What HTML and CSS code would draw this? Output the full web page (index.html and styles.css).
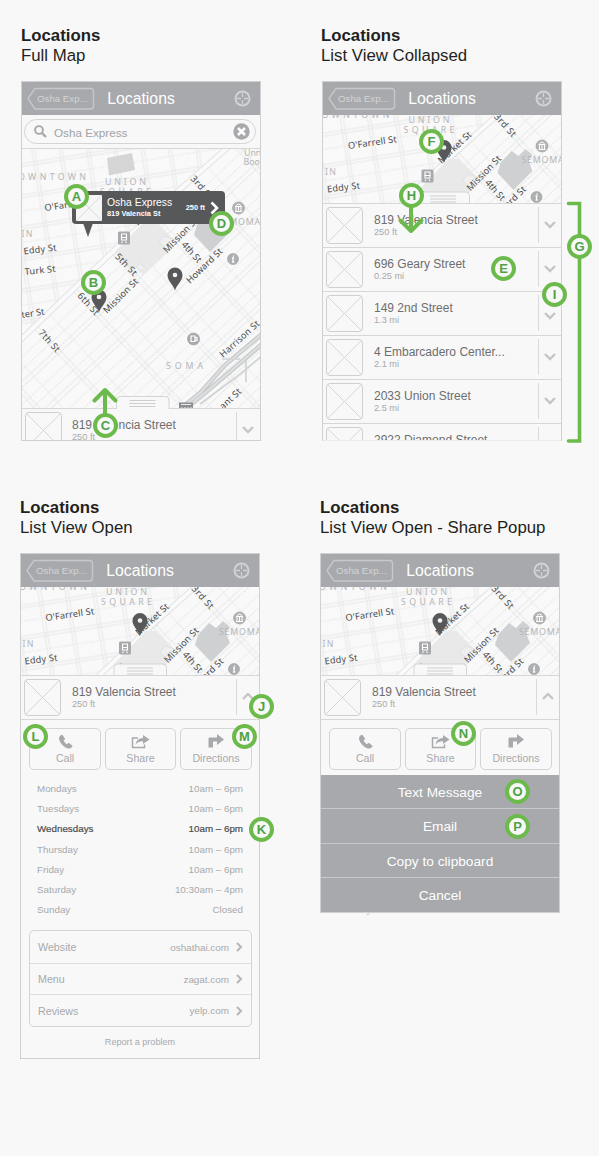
FILE: index.html
```html
<!DOCTYPE html>
<html lang="en">
<head>
<meta charset="utf-8">
<title>Locations</title>
<link rel="stylesheet" href="styles.css">
</head>
<body>
<svg class="defs" width="0" height="0" aria-hidden="true">
  <defs>
    <pattern id="nw" width="27" height="31" patternUnits="userSpaceOnUse" patternTransform="rotate(-9)">
      <path d="M0 10H27M0 13H27M8 0V31M11 0V31" stroke="#e3e3e4" stroke-width=".8" fill="none"/>
      <path d="M0 26H27" stroke="#eaeaea" stroke-width="1" stroke-dasharray="3 1" fill="none"/>
    </pattern>
    <pattern id="se" width="54" height="35" patternUnits="userSpaceOnUse" patternTransform="rotate(-43)">
      <path d="M0 14H54M0 18.500H54M17 0V35M21 0V35" stroke="#dedfe0" stroke-width=".8" stroke-dasharray="3 .8" fill="none"/>
      <path d="M0 31H54M0 5.500H54M38 0V35" stroke="#e5e5e6" stroke-width=".9" stroke-dasharray="2 1" fill="none"/>
    </pattern>
    <g id="pin"><path d="M0 11.500C-1.500 6-7.500 2-7.500-4A7.500 7.500 0 0 1 7.500-4C7.500 2 1.500 6 0 11.500Z" fill="#57585a"/><circle cy="-4" r="2.300" fill="#f4f4f4"/></g>
    <g id="map">
      <rect x="10" y="140" width="260" height="280" fill="#f9f9f9"/>
      <path d="M10 140H235L150 215L10 347Z" fill="url(#nw)"/>
      <path d="M235 140H270V420H10V350L150 218Z" fill="url(#se)"/>
      <path d="M10 350L150 216L236 140" stroke="#e3e4e5" stroke-width="6" fill="none"/>
      <path d="M10 350L150 216L236 140" stroke="#fafafa" stroke-width="4" fill="none"/>
      <path d="M107 158L132 153L135 170L109 175.500Z" fill="#d5d5d6"/>
      <path d="M115 252L145 221L155 221L173 239L164 247L168 251L143 275L136 268L131 272Z" fill="#e9e9e9"/>
      <path d="M159 242L164 236L173 239L164 247ZM136 268L140 263L147 270" fill="#efefef" stroke="#dcdddd" stroke-width=".8"/>
      <path d="M208 213L215 218L222 211L229 217L225 223L229 233L210 252L194 235L197 225Z" fill="#cfd0d1"/>
      <path d="M262 334L225 365L200 393L184 406M262 344L232 370L205 393L184 410" stroke="#c3c5c7" stroke-width="4.500" fill="none"/>
      <path d="M262 334L225 365L200 393L184 406M262 344L232 370L205 393L184 410" stroke="#dcddde" stroke-width="2.500" fill="none"/>
      <path d="M262 356L235 378L200 404M222 359H240M246 360V382" stroke="#d0d2d3" stroke-width="1.600" fill="none"/>
      <g class="district">
        <text x="18" y="180" textLength="68">OWNTOWN</text>
        <text x="105" y="184.500" textLength="41">UNION</text>
        <text x="100" y="194.500" textLength="51">SQUARE</text>
        <text x="21.500" y="237" textLength="11">IN</text>
        <text x="218" y="225" textLength="42">SEMOMA</text>
        <text x="166" y="368.500" textLength="37">SOMA</text>
        <text x="244" y="155.500">Unn</text>
        <text x="243.500" y="165">Boo</text>
      </g>
      <g class="street">
        <text transform="translate(45 211) rotate(-8)" textLength="49">O'Farrell St</text>
        <text transform="translate(24 254.500) rotate(-7)" textLength="33">Eddy St</text>
        <text transform="translate(25 275) rotate(-6)" textLength="31">Turk St</text>
        <text transform="translate(22 318) rotate(-9)" textLength="23">ter St</text>
        <text transform="translate(38 333) rotate(48)" textLength="27">7th St</text>
        <text transform="translate(77 296) rotate(48)" textLength="27">6th St</text>
        <text transform="translate(114.500 257) rotate(46)" textLength="27">5th St</text>
        <text transform="translate(181 245) rotate(48)" textLength="25">4th St</text>
        <text transform="translate(190 179) rotate(48)" textLength="28">3rd St</text>
        <text transform="translate(138 226) rotate(-43)" textLength="42">Market St</text>
        <text transform="translate(107 314) rotate(-45)" textLength="45">Mission St</text>
        <text transform="translate(167 253.500) rotate(-46)" textLength="45">Mission St</text>
        <text transform="translate(190 284) rotate(-44)" textLength="46">Howard St</text>
        <text transform="translate(223 358) rotate(-42)" textLength="50">Harrison St</text>
        <text transform="translate(223 410) rotate(-43)" textLength="26">ant St</text>
      </g>
      <rect x="118" y="231.500" width="12" height="13" rx="1.500" fill="#a7a9ac"/>
      <path d="M121.500 234h5v6h-5zM121.500 243l1-1.500M126.500 243l-1-1.500" fill="none" stroke="#fff" stroke-width="1.100"/><path d="M121 237.500h6" stroke="#fff"/>
      <circle cx="238.500" cy="208" r="6" fill="#b1b3b5" stroke="#999b9e" stroke-width=".6"/>
      <path d="M235 206.500h7M235 211.500h7M236 207v4M241 207v4M238.500 207v4M236 205.500l2.500-1.500l2.500 1.500" stroke="#fff" fill="none"/>
      <circle cx="233" cy="259" r="5.500" fill="#adafb1" stroke="#999b9e" stroke-width=".6"/>
      <path d="M233.500 255.500v1.300M232 258h1.300l-.5 4h1.400" stroke="#fff" stroke-width="1.300" fill="none"/>
      <circle cx="193.500" cy="339" r="6" fill="#a7a9ac" stroke="#999b9e" stroke-width=".6"/>
      <path d="M191 336h4v5.500h-4zM195 337.500h2v3h-2" fill="none" stroke="#fff" stroke-width="1.200"/>
      <path d="M179 402.500h14v8h-14z" fill="#8b8d90"/><path d="M181 404.500h10M182 407v4M185 407v4M188 407v4M191 407v4" stroke="#eee"/>
    </g>
    <g id="tab"><path d="M0 12.500H95V4Q95 .500 98.500 .500H144Q147.500 .500 147.500 4V12.500" fill="#f8f8f8" stroke="#d3d4d5"/><path d="M-5 12.500H245" stroke="#d6d7d8"/><path d="M95.500 12.500H147" stroke="#f8f8f8" stroke-width="1.400"/><path d="M108 4.500H134M108 7.500H134M108 10.500H134" stroke="#ccced0" stroke-width="1.200"/></g>
    <g id="back"><path d="M1 11.500L8 1.500H63.500Q66.500 1.500 66.500 4.500V19Q66.500 22 63.500 22H8Z" fill="none" stroke="#c6c8ca" stroke-width="1.400"/></g>
    <g id="locate" fill="none" stroke="#d0d2d4"><circle cx="8.500" cy="8.500" r="7" stroke-width="2"/><path d="M8.500 3V7M8.500 10V14M3 8.500H7M10 8.500H14" stroke-width="1.300"/></g>
    <g id="down"><path d="M1 1L6 6L11 1" fill="none" stroke="#c3c5c7" stroke-width="2.400"/></g>
    <g id="up"><path d="M1 6L6 1L11 6" fill="none" stroke="#c3c5c7" stroke-width="2.400"/></g>
    <g id="right"><path d="M1 1L5 5L1 9" fill="none" stroke="#b4b6b8" stroke-width="2"/></g>
    <g id="thumb"><rect x=".500" y=".500" width="36" height="36" rx="3.500" fill="none" stroke="#cdcfd0"/><path d="M2 2L35 35M35 2L2 35" stroke="#d6d7d8"/></g>
    <g id="phone"><path d="M4.500 1L6.800 4.200Q7.300 5 6.500 5.700L5.500 6.500Q6.600 8.800 9 10.200L10 9.300Q10.800 8.700 11.500 9.300L14.200 11.500Q14.800 12.200 14 13Q12 15.300 9 14.200Q2.500 11.300 1 5Q.600 2.800 2.800 1.200Q3.800 .300 4.500 1Z" fill="#a7a9ac"/></g>
    <g id="share"><path d="M7 4H1.500V13.500H13.500V10.500" fill="none" stroke="#a7a9ac" stroke-width="1.500"/><path d="M12 1L18.500 5.500L12 10V7.200Q7.500 7 4.500 10.500Q5.500 4.300 12 4Z" fill="#a7a9ac"/></g>
    <g id="turn"><path d="M.500 13.500V4.500Q.500 3.500 1.500 3.500H9V0L16 5.500L9 11V7.500H5V13.500Z" fill="#a7a9ac"/></g>
  </defs>
</svg>

<main class="board">
  <section class="cell">
    <h2 class="caption offset"><b>Locations</b><span>Full Map</span></h2>
    <div class="screen full">
      <header class="bar"><span class="back"><svg class="back-shape" width="68" height="24"><use href="#back"/></svg>Osha Exp...</span><h3>Locations</h3><svg class="locate" width="17" height="17"><use href="#locate"/></svg></header>
      <div class="search">
        <div class="field">
          <svg width="13" height="13" viewBox="0 0 13 13"><circle cx="5" cy="5" r="3.900" fill="none" stroke="#a7a9ac" stroke-width="1.900"/><path d="M8 8L12 12" stroke="#a7a9ac" stroke-width="2.400"/></svg>
          <span>Osha Express</span>
          <svg class="clear" width="17" height="17" viewBox="0 0 17 17"><circle cx="8.500" cy="8.500" r="8.200" fill="#a7a9ac"/><path d="M5 5L12 12M12 5L5 12" stroke="#fff" stroke-width="2.600"/></svg>
        </div>
      </div>
      <div class="map-wrap">
        <svg class="map" width="238" height="260" viewBox="22 149 238 260"><use href="#map"/><use href="#pin" x="175" y="279"/><use href="#pin" x="99" y="301"/><use href="#tab" x="21.500" y="396"/></svg>
        <div class="bubble">
          <svg width="26" height="26"><rect width="26" height="26" rx="1" fill="#f6f6f6"/><path d="M1 1L25 25M25 1L1 25" stroke="#d5d6d7" stroke-width=".8"/></svg>
          <div class="bubble-text"><span>Osha Express</span><b>819 Valencia St</b></div>
          <b class="feet">250 ft</b>
          <svg width="9" height="14"><path d="M1.500 1.500L7 7L1.500 12.500" fill="none" stroke="#fff" stroke-width="2.600"/></svg>
        </div>
      </div>
      <div class="row first"><svg class="thumb" width="37" height="37"><use href="#thumb"/></svg><div class="place"><span>819 Valencia Street</span><small>250 ft</small></div><span class="toggle"><svg width="12" height="8"><use href="#down"/></svg></span></div>
    </div>
  </section>

  <section class="cell">
    <h2 class="caption offset"><b>Locations</b><span>List View Collapsed</span></h2>
    <div class="screen list">
      <header class="bar"><span class="back"><svg class="back-shape" width="68" height="24"><use href="#back"/></svg>Osha Exp...</span><h3>Locations</h3><svg class="locate" width="17" height="17"><use href="#locate"/></svg></header>
      <svg class="map" width="238" height="88" viewBox="19.500 177 238 88"><use href="#map"/><use href="#pin" x="140.500" y="213.500"/><use href="#tab" x="18.500" y="253.500"/></svg>
      <div class="row"><svg class="thumb" width="37" height="37"><use href="#thumb"/></svg><div class="place"><span>819 Valencia Street</span><small>250 ft</small></div><span class="toggle"><svg width="12" height="8"><use href="#down"/></svg></span></div>
      <div class="row"><svg class="thumb" width="37" height="37"><use href="#thumb"/></svg><div class="place"><span>696 Geary Street</span><small>0.25 mi</small></div><span class="toggle"><svg width="12" height="8"><use href="#down"/></svg></span></div>
      <div class="row"><svg class="thumb" width="37" height="37"><use href="#thumb"/></svg><div class="place"><span>149 2nd Street</span><small>1.3 mi</small></div><span class="toggle low"><svg width="12" height="8"><use href="#down"/></svg></span></div>
      <div class="row"><svg class="thumb" width="37" height="37"><use href="#thumb"/></svg><div class="place"><span>4 Embarcadero Center...</span><small>2.1 mi</small></div><span class="toggle"><svg width="12" height="8"><use href="#down"/></svg></span></div>
      <div class="row"><svg class="thumb" width="37" height="37"><use href="#thumb"/></svg><div class="place"><span>2033 Union Street</span><small>2.5 mi</small></div><span class="toggle"><svg width="12" height="8"><use href="#down"/></svg></span></div>
      <div class="row"><svg class="thumb" width="37" height="37"><use href="#thumb"/></svg><div class="place"><span>2922 Diamond Street</span></div><span class="toggle"></span></div>
    </div>
  </section>

  <section class="cell">
    <h2 class="caption"><b>Locations</b><span>List View Open</span></h2>
    <div class="screen open">
      <header class="bar"><span class="back"><svg class="back-shape" width="68" height="24"><use href="#back"/></svg>Osha Exp...</span><h3>Locations</h3><svg class="locate" width="17" height="17"><use href="#locate"/></svg></header>
      <svg class="map" width="238" height="88" viewBox="20 177 238 88"><use href="#map"/><use href="#pin" x="139" y="214.500"/><use href="#tab" x="18" y="253.500"/></svg>
      <div class="row"><svg class="thumb" width="37" height="37"><use href="#thumb"/></svg><div class="place"><span>819 Valencia Street</span><small>250 ft</small></div><span class="toggle"><svg width="12" height="8"><use href="#up"/></svg></span></div>
      <div class="actions">
        <div class="action"><svg width="15" height="15"><use href="#phone"/></svg>Call</div>
        <div class="action"><svg width="19" height="15"><use href="#share"/></svg>Share</div>
        <div class="action"><svg width="16" height="15"><use href="#turn"/></svg>Directions</div>
      </div>
      <dl class="hours">
        <div><dt>Mondays</dt><dd>10am – 6pm</dd></div>
        <div><dt>Tuesdays</dt><dd>10am – 6pm</dd></div>
        <div class="today"><dt>Wednesdays</dt><dd>10am – 6pm</dd></div>
        <div><dt>Thursday</dt><dd>10am – 6pm</dd></div>
        <div><dt>Friday</dt><dd>10am – 6pm</dd></div>
        <div><dt>Saturday</dt><dd>10:30am – 4pm</dd></div>
        <div><dt>Sunday</dt><dd>Closed</dd></div>
      </dl>
      <div class="links">
        <div><span>Website</span><em>oshathai.com</em><svg width="7" height="10"><use href="#right"/></svg></div>
        <div><span>Menu</span><em>zagat.com</em><svg width="7" height="10"><use href="#right"/></svg></div>
        <div><span>Reviews</span><em>yelp.com</em><svg width="7" height="10"><use href="#right"/></svg></div>
      </div>
      <p class="report">Report a problem</p>
    </div>
  </section>

  <section class="cell">
    <h2 class="caption"><b>Locations</b><span>List View Open - Share Popup</span></h2>
    <div class="screen popup">
      <header class="bar"><span class="back"><svg class="back-shape" width="68" height="24"><use href="#back"/></svg>Osha Exp...</span><h3>Locations</h3><svg class="locate" width="17" height="17"><use href="#locate"/></svg></header>
      <svg class="map" width="238" height="88" viewBox="20 177 238 88"><use href="#map"/><use href="#pin" x="139" y="214.500"/><use href="#tab" x="18" y="253.500"/></svg>
      <div class="row"><svg class="thumb" width="37" height="37"><use href="#thumb"/></svg><div class="place"><span>819 Valencia Street</span><small>250 ft</small></div><span class="toggle"><svg width="12" height="8"><use href="#up"/></svg></span></div>
      <div class="actions">
        <div class="action"><svg width="15" height="15"><use href="#phone"/></svg>Call</div>
        <div class="action"><svg width="19" height="15"><use href="#share"/></svg>Share</div>
        <div class="action"><svg width="16" height="15"><use href="#turn"/></svg>Directions</div>
      </div>
      <div class="sheet"><div>Text Message</div><div>Email</div><div>Copy to clipboard</div><div>Cancel</div></div>
    </div>
    <div class="peek"><span>Sunday</span><span>Closed</span></div>
  </section>

  <svg class="arrows" width="599" height="1156" fill="none" stroke="#6dba4c">
    <path d="M105 414V391M94.500 400.500L105 390L115.500 400.500" stroke-width="4" stroke-linecap="round" stroke-linejoin="round"/>
    <path d="M411 206V230M400.500 220.500L411 231L421.500 220.500" stroke-width="4" stroke-linecap="round" stroke-linejoin="round"/>
    <path d="M568.500 203.500H579.500V441H568.500" stroke-width="3.600" stroke-linecap="round"/>
  </svg>
  <i class="mark a">A</i><i class="mark b">B</i><i class="mark c">C</i><i class="mark d">D</i>
  <i class="mark e">E</i><i class="mark f">F</i><i class="mark g">G</i><i class="mark h">H</i>
  <i class="mark i">I</i><i class="mark j">J</i><i class="mark k">K</i><i class="mark l">L</i>
  <i class="mark m">M</i><i class="mark n">N</i><i class="mark o">O</i><i class="mark p">P</i>
</main>
</body>
</html>
```
FILE: styles.css
```css
* { box-sizing: border-box; }
body { margin: 0; background: #f8f8f8; font-family: "Liberation Sans", Arial, sans-serif; color: #231f20; }
svg { display: block; flex: none; }
.defs { position: absolute; }
h2, h3, p, dl, dd { margin: 0; font-weight: normal; }

.board { position: relative; width: 599px; height: 1156px; display: grid; grid-template-columns: 300px 299px; grid-template-rows: 472px 684px; overflow: hidden; }
.cell { padding: 26px 0 0 20px; }
.caption { display: flex; flex-direction: column; height: 55px; font-size: 16.8px; line-height: 20px; white-space: nowrap; }
.caption.offset { padding-left: 1px; }

.screen { width: 240px; border: 1px solid #cfd0d2; background: #f8f8f8; overflow: hidden; }
.full { height: 360px; margin-left: 1px; }
.list { height: 360px; margin-left: 2px; border-bottom-color: #ececec; }
.open { height: 506px; }
.popup { height: 360px; }

.bar { display: grid; grid-template-columns: 1fr auto 1fr; align-items: center; height: 33px; padding: 0 9px 0 5px; background: #a7a9ac; }
.bar h3 { font-size: 15.8px; line-height: 20px; color: #fff; padding: 1px 0 0 4px; }
.locate { justify-self: end; }
.back { position: relative; display: flex; align-items: center; width: 68px; height: 24px; padding-left: 10px; font-size: 9.7px; color: #d3d5d7; }
.back-shape { position: absolute; left: 0; top: 0; }

.search { height: 34px; padding: 4px 4px 0 2px; border-bottom: 1px solid #d6d7d8; }
.field { display: flex; align-items: center; height: 25px; padding: 0 5px 0 9px; border: 1.5px solid #d3d4d5; border-radius: 13px; font-size: 11.7px; color: #a0a2a5; }
.field span { flex: 1; padding: 1px 0 0 7px; }

.map-wrap { position: relative; }
.street text, .district text { font-family: "Noto Sans", sans-serif; }
.street { font-size: 9.2px; fill: #4a4b4d; }
.district { font-size: 8.8px; fill: #b4b6b8; }
.bubble { position: absolute; left: 50px; top: 42px; width: 153px; height: 33px; padding: 0 6px 0 4px; display: flex; align-items: center; background: #57585a; border-radius: 4px; color: #fff; }
.bubble::after { content: ""; position: absolute; left: 11px; top: 32px; border: 5.500px solid transparent; border-top: 14px solid #57585a; border-bottom: 0; }
.bubble-text { flex: 1; padding-left: 5px; display: flex; flex-direction: column; white-space: nowrap; }
.bubble-text span { font-size: 10.4px; line-height: 12px; }
.bubble-text b { font-size: 7.4px; line-height: 9px; }
.feet { font-size: 7.400px; margin-right: 5px; white-space: nowrap; }

.row { display: flex; height: 44px; padding: 3px 4px 0 3px; border-top: 1px solid #d6d7d8; }
.row.first { border-top: 0; padding: 3px 5px 0 3px; }
.place { flex: 1; padding: 6px 0 0 11px; display: flex; flex-direction: column; white-space: nowrap; }
.row.first .place { padding-left: 10px; }
.place span { font-size: 12px; line-height: 14px; color: #6d6e70; }
.place small { font-size: 9.2px; line-height: 11px; color: #a7a9ac; }
.toggle { display: flex; align-items: center; justify-content: center; width: 19px; height: 36px; border-left: 1px solid #d9dadb; padding-left: 4px; }
.toggle.low { padding-top: 5px; }

.actions { display: grid; grid-template-columns: 72px 71px 72px; column-gap: 4px; padding: 8px 8px 4px; border-top: 1px solid #d6d7d8; }
.action { height: 42px; padding-top: 5px; display: flex; flex-direction: column; align-items: center; gap: 2px; border: 1.5px solid #d3d4d5; border-radius: 5px; font-size: 10.6px; line-height: 14px; color: #a7a9ac; }

.hours { padding: 5px 16px 0; font-size: 9.8px; color: #a7a9ac; }
.hours div { display: flex; justify-content: space-between; height: 20.200px; line-height: 20px; }
.hours .today { color: #4c4d4f; -webkit-text-stroke: .2px #4c4d4f; }
.links { margin: 10px 7px 0 8px; border: 1.5px solid #d3d4d5; border-radius: 5px; color: #a7a9ac; }
.links div { display: flex; align-items: center; height: 31.500px; padding: 0 8px; }
.links div + div { border-top: 1px solid #dddedf; }
.links span { flex: 1; font-size: 10.7px; }
.links em { font-style: normal; font-size: 9.9px; margin-right: 7px; }
.report { text-align: center; font-size: 9.100px; line-height: 14px; margin-top: 8px; color: #a7a9ac; }

.popup .actions { padding-bottom: 4.500px; }
.sheet div { height: 34.600px; background: #a7a9ac; border-bottom: 1px solid #c6c8ca; color: #fff; font-size: 13.7px; line-height: 35px; text-align: center; }
.peek { display: flex; justify-content: space-between; align-items: flex-end; width: 206px; margin-left: 18px; height: 2px; overflow: hidden; font-size: 9.8px; line-height: 10px; color: #c6c8ca; }

.arrows { position: absolute; left: 0; top: 0; }
.mark { position: absolute; width: 25px; height: 25px; margin: -12.500px 0 0 -12.500px; border: 4px solid #6dba4c; border-radius: 50%; background: #f8f8f8; color: #4ea246; font: bold 13px/17px "Liberation Sans", Arial, sans-serif; text-align: center; }
.a { left: 76.500px; top: 196.500px; }
.b { left: 93.500px; top: 282.500px; }
.c { left: 105.500px; top: 425.500px; }
.d { left: 221.500px; top: 223.500px; }
.e { left: 503.500px; top: 268.500px; }
.f { left: 431.500px; top: 141.500px; }
.g { left: 579.500px; top: 246.500px; }
.h { left: 411.500px; top: 195.500px; }
.i { left: 554.500px; top: 294.500px; }
.j { left: 261.500px; top: 706.500px; }
.k { left: 261.500px; top: 829.500px; }
.l { left: 35.500px; top: 736.500px; }
.m { left: 244.500px; top: 736.500px; }
.n { left: 463.500px; top: 733.500px; }
.o { left: 517.500px; top: 791.500px; }
.p { left: 517.500px; top: 826.500px; }
```
